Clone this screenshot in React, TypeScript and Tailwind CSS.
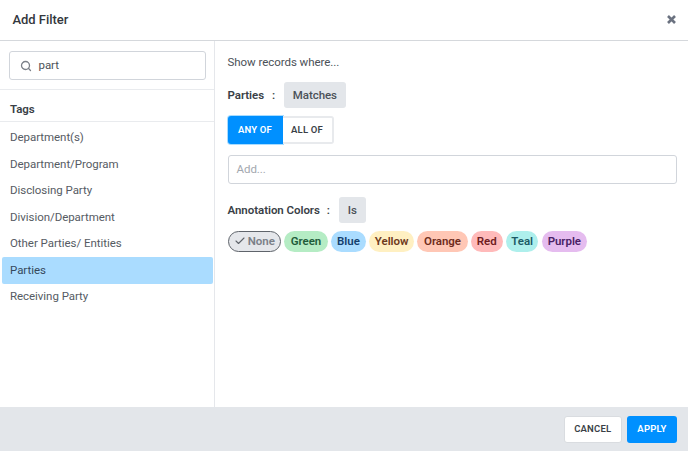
import React from "react";
import { Search, Check } from "lucide-react";

const tags = ["Department(s)", "Department/Program", "Disclosing Party", "Division/Department", "Other Parties/ Entities", "Parties", "Receiving Party"];

const colors = [
  { name: "Green", cls: "bg-[#b5ecc4] text-[#1f5c3a] w-[43.6px]" },
  { name: "Blue", cls: "bg-[#aadcff] text-[#143f6e] w-[35px]" },
  { name: "Yellow", cls: "bg-[#fff0c2] text-[#6e3a1c] w-[45px]" },
  { name: "Orange", cls: "bg-[#ffc7b5] text-[#6e2c1c] w-[50.4px]" },
  { name: "Red", cls: "bg-[#ffbaba] text-[#6e1c1f] w-[31.7px]" },
  { name: "Teal", cls: "bg-[#aeefec] text-[#1c5a66] w-[32.7px]" },
  { name: "Purple", cls: "bg-[#e5bcef] text-[#4a1f66] w-[45.3px]" },
];

export default function App() {
  return (
    <div className="w-[688px] h-[451px] bg-white flex flex-col overflow-hidden font-['Roboto',sans-serif] text-[11.5px] tracking-[-0.05px] text-[#3a3f47]">
      <header className="h-[41px] shrink-0 border-b border-[#d5d8dc] flex items-center justify-between pl-[12.5px] pr-[12px]">
        <h1 className="text-[13px] leading-[20px] font-medium text-[#33373d]">Add Filter</h1>
        <svg width="9" height="9" viewBox="0 0 9 9" aria-hidden="true" className="mb-[1px]">
          <path d="M1 1 L8 8 M8 1 L1 8" stroke="#6b7280" strokeWidth="2.6" />
        </svg>
      </header>

      <main className="flex flex-1 min-h-0">
        <aside className="w-[215px] shrink-0 border-r border-[#e5e7eb] flex flex-col">
          <div className="h-[49px] shrink-0 border-b border-[#e9ebee] pl-[9px] pr-[8.5px] pt-[10px]">
            <div className="h-[29px] border border-[#d1d5db] rounded-[3px] flex items-center pl-[9.5px] gap-[7px]">
              <Search size={12} strokeWidth={2.6} className="text-[#7b8088]" />
              <span className="text-[#4b5158]">part</span>
            </div>
          </div>
          <div className="h-[32px] shrink-0 border-b border-[#e9ebee] pl-[10px] flex items-center">
            <span className="font-semibold text-[#3a3f47] pt-[9px]">Tags</span>
          </div>
          <ul className="flex flex-col pt-[2.5px] pl-[2px] pr-[1px]">
            {tags.map((t) => (
              <li
                key={t}
                className={`h-[26.5px] flex items-center pl-[8px] rounded-[2px] ${t === "Parties" ? "bg-[#aadcff] text-[#35495c]" : "text-[#565b63]"}`}
              >
                {t}
              </li>
            ))}
          </ul>
        </aside>

        <section className="flex-1 min-w-0 pl-[12.5px] pr-[11px] flex flex-col items-start">
          <p className="leading-[16px] mt-[13px] text-[#4b5158]">Show records where...</p>
          <div className="flex items-center mt-[12px] h-[26px]">
            <span className="font-semibold text-[#3a3f47] pt-[2px]">Parties</span>
            <span className="font-semibold ml-[8px] text-[#3a3f47] pt-[2px]">:</span>
            <span className="ml-[9px] h-[26px] w-[61.5px] pt-[2px] bg-[#e3e6ea] rounded-[3px] flex items-center justify-center font-medium text-[#4b5158]">Matches</span>
          </div>
          <div className="flex mt-[8px] h-[28px]">
            <button className="w-[55px] bg-[#0090ff] text-white text-[9.5px] font-semibold tracking-[0.2px] rounded-l-[3px] ring-1 ring-[#a8dcff]">ANY OF</button>
            <button className="w-[51px] bg-white border-2 border-l-0 border-[#e8eaed] text-[#3a3f47] text-[9.5px] font-semibold tracking-[0.2px] rounded-r-[3px]">ALL OF</button>
          </div>
          <div className="w-full h-[29px] mt-[11px] border border-[#d1d5db] rounded-[3px] flex items-center pl-[8px] text-[#a3a8af]">Add...</div>
          <div className="flex items-center mt-[13px] h-[26px]">
            <span className="font-semibold text-[#3a3f47] pt-[2px]">Annotation Colors</span>
            <span className="font-semibold ml-[7px] text-[#3a3f47] pt-[2px]">:</span>
            <span className="ml-[9px] h-[26px] w-[27px] pt-[1px] bg-[#e3e6ea] rounded-[3px] flex items-center justify-center font-medium text-[#4b5158]">Is</span>
          </div>
          <div className="flex items-center gap-[3.2px] mt-[7.5px]">
            <span className="w-[53.5px] h-[21.5px] bg-[#e5e7eb] border border-[#5f646b] rounded-full flex items-center justify-center gap-[2px] font-semibold text-[#7b8088]">
              <Check size={12} strokeWidth={2.2} className="text-[#5f646b]" />
              None
            </span>
            {colors.map((c) => (
              <span key={c.name} className={`h-[21.5px] rounded-full flex items-center justify-center font-semibold ${c.cls}`}>
                {c.name}
              </span>
            ))}
          </div>
        </section>
      </main>

      <footer className="h-[44px] shrink-0 bg-[#e3e6ea] flex items-center justify-end gap-[5.5px] pr-[11px]">
        <button className="w-[57.5px] h-[27px] bg-white border border-[#d9dce0] rounded-[3px] text-[9.5px] font-semibold tracking-[0.2px] text-[#3a3f47]">CANCEL</button>
        <button className="w-[50px] h-[27px] bg-[#0090ff] rounded-[3px] text-[9.5px] font-semibold tracking-[0.2px] text-white">APPLY</button>
      </footer>
    </div>
  );
}
